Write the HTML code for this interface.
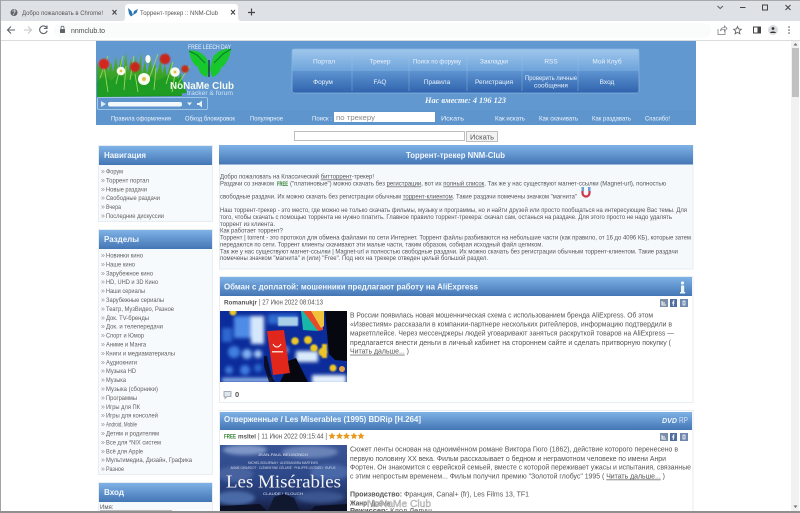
<!DOCTYPE html>
<html lang="ru"><head><meta charset="utf-8"><title>Торрент-трекер :: NNM-Club</title>
<style>
html,body{margin:0;padding:0;background:#fff;width:800px;height:513px;overflow:hidden}
svg{position:absolute;left:0;top:0;display:block;filter:blur(.3px)}
text{font-family:"Liberation Sans","DejaVu Sans",sans-serif;white-space:pre}
.b{font-size:6.3px;fill:#555}
.s{font-size:6.9px;fill:#555}
.n{font-size:6.5px;fill:#5f5f5f}
.r{font-size:7px;fill:#8a8a8a}
.w{font-size:6.5px;fill:#edf4fb}
.m{font-size:6.5px;fill:#eaf2fb;text-anchor:middle}
.h{font-size:8.6px;font-weight:bold;fill:#f2f7fc}
.u{text-decoration:underline}
.ch{font-size:6.5px;fill:#555}
.ic{fill:none;stroke:#5f6368;stroke-width:1.1}
</style></head><body>
<svg width="800" height="513" viewBox="0 0 800 513" xmlns="http://www.w3.org/2000/svg">
<defs>
<linearGradient id="head" x1="0" y1="0" x2="0" y2="1"><stop offset="0" stop-color="#7fb2e6"/><stop offset="1" stop-color="#4376b4"/></linearGradient>
<linearGradient id="m1" x1="0" y1="0" x2="0" y2="1"><stop offset="0" stop-color="#a0c7ec"/><stop offset="1" stop-color="#6da3da"/></linearGradient>
<linearGradient id="m2" x1="0" y1="0" x2="0" y2="1"><stop offset="0" stop-color="#5d94d0"/><stop offset="1" stop-color="#2f63ad"/></linearGradient>
<linearGradient id="grass" x1="0" y1="0" x2="0" y2="1"><stop offset="0" stop-color="#58b030"/><stop offset="1" stop-color="#1c9620"/></linearGradient>
<linearGradient id="lm" x1="0" y1="0" x2="0" y2="1"><stop offset="0" stop-color="#3a5596"/><stop offset=".5" stop-color="#2c4788"/><stop offset=".8" stop-color="#22356c"/><stop offset="1" stop-color="#141c3c"/></linearGradient>
<filter id="bl"><feGaussianBlur stdDeviation="1.8"/></filter>
<filter id="bl1"><feGaussianBlur stdDeviation=".7"/></filter>
<clipPath id="c1"><rect x="220" y="311" width="127" height="71"/></clipPath>
<clipPath id="c2"><rect x="220" y="445" width="127" height="66"/></clipPath>
</defs>

<!-- Browser chrome -->
<rect width="800" height="21" fill="#dee1e6"/>
<rect width="800" height="1" fill="#a8a9ab"/>
<rect y="21" width="800" height="19" fill="#fff"/>
<rect y="40" width="800" height="1" fill="#dadce0"/>
<rect x="54" y="23" width="657" height="15" rx="7.500" fill="#fafbfb"/>
<path d="M122 21 a3 3 0 0 0 3-3 V7 a3 3 0 0 1 3-3 H235 a3 3 0 0 1 3 3 V18 a3 3 0 0 0 3 3z" fill="#fff"/>
<circle cx="14" cy="12.500" r="3.500" fill="#5f6368"/><path d="M12 11h4M14 9l1 3-2 3" stroke="#dee1e6" stroke-width=".7" fill="none"/>
<text x="22" y="15" class="ch" textLength="81" lengthAdjust="spacingAndGlyphs">Добро пожаловать в Chrome!</text>
<path d="M112.500 10l4 4.500M116.500 10l-4 4.500" stroke="#444" stroke-width="1.100"/>
<path d="M128 8l3.500 3 1.500 4-2 1.500-2-2.500zM133 15l1-4 4-2-1.500 4z" fill="#2d76b4"/>
<text x="140" y="15" class="ch" textLength="78" lengthAdjust="spacingAndGlyphs">Торрент-трекер :: NNM-Club</text>
<path d="M231 10l4 4.500M235 10l-4 4.500" stroke="#444" stroke-width="1.100"/>
<path d="M251.500 8.500v7M248 12.500h7" stroke="#444" stroke-width="1.200"/>
<path d="M15 30h-7M11 26.500L7.500 30l3.500 3.500" class="ic"/>
<path d="M24 30h7M28 26.500l3.500 3.500-3.500 3.500" fill="none" stroke="#c4c7cb" stroke-width="1.100"/>
<path d="M46.500 27.500a3.800 3.800 0 1 0 .6 3.200M47 25.500v3h-3" class="ic"/>
<rect x="60" y="29" width="5" height="4" rx=".6" fill="#5f6368"/><path d="M61 29v-1.300a1.500 1.500 0 0 1 3 0V29" fill="none" stroke="#5f6368" stroke-width=".8"/>
<text x="71" y="33" font-size="7" fill="#4a4a4a" textLength="34" lengthAdjust="spacingAndGlyphs">nnmclub.to</text>
<path d="M718 29v5.500h7V31M720.500 30.500c.3-2 1.700-3 4-3V26l2.500 2.500-2.500 2.500v-1.500c-1.800 0-3 .2-4 1z" fill="none" stroke="#7a7d81" stroke-width=".8"/>
<path d="M737.500 26.500l1.100 2.500 2.700.3-2 1.800.6 2.700-2.400-1.400-2.400 1.400.6-2.700-2-1.800 2.700-.3z" fill="none" stroke="#5f6368" stroke-width=".9"/>
<rect x="753.500" y="27" width="7" height="6" fill="none" stroke="#444" stroke-width="1"/><rect x="757.500" y="27" width="3" height="6" fill="#444"/>
<circle cx="773" cy="30" r="5" fill="#dadce0"/><circle cx="773" cy="28.500" r="1.400" fill="#333"/><path d="M770 33c.3-2 5.700-2 6 0z" fill="#333"/>
<g fill="#555"><circle cx="789" cy="27" r=".8"/><circle cx="789" cy="30" r=".8"/><circle cx="789" cy="33" r=".8"/></g>
<path d="M717.500 6l2.700 2.500L723 6" class="ic"/>
<path d="M740 7.500h5.500" stroke="#444" stroke-width="1"/>
<rect x="762.500" y="5" width="5" height="5" fill="none" stroke="#444" stroke-width="1"/>
<path d="M785.500 5l5 5M790.500 5l-5 5" stroke="#444" stroke-width="1"/>

<!-- window border -->
<rect x="0" y="0" width="1" height="513" fill="#a2a3a5"/>

<!-- Scrollbar -->
<rect x="791" y="41" width="8" height="470" fill="#f1f1f1"/>
<rect x="792" y="48" width="7" height="49" fill="#c1c1c1"/>
<path d="M795.500 43l-2 2.500h4zM795.500 508l-2-2.500h4z" fill="#707070"/>

<!-- Site header -->
<rect x="96" y="41" width="600" height="84" fill="#6198d0"/>
<rect x="96" y="110" width="600" height="15" fill="#5f95cd"/>

<!-- logo -->
<g>
<path d="M97 97 V62 l2 6 2-4 2 8 3-14 2 14 3-10 2 10 3-16 2 14 3-12 2 14 3-20 2 20 3-14 2 14 3-16 2 16 3-20 1 22 3-14 2 14 4-18 1 18 3-12 2 12 4-16 1 16 3-10 2 12 4-14 2 16 4-12 1 14 3-8 1 24z" fill="url(#grass)"/>
<path d="M97 97 V82 l8-6 6 5 8-7 7 7 8-6 7 6 9-6 7 6 9-5 7 5 8-4 6 16z" fill="#1f9c24"/>
<path d="M100 78l8-22M108 92l-4-26M116 84l7-28M124 90l2-24M130 80l4-24M138 92l-3-18M148 82l10-28M154 90l2-22M166 84l7-22M172 92l3-18M178 84l12-18" stroke="#98d85a" stroke-width=".9" fill="none"/>
<g filter="url(#bl1)">
<circle cx="104" cy="64" r="5.300" fill="#d4281c"/><circle cx="135" cy="67" r="5" fill="#c8281c"/><circle cx="165" cy="59" r="5.300" fill="#c9261c"/><circle cx="185" cy="69" r="3.800" fill="#c03018"/>
</g>
<g fill="#fbfbf2"><circle cx="121" cy="71" r="4.300"/><circle cx="144" cy="79" r="6"/><ellipse cx="148" cy="59" rx="2.600" ry="4"/><circle cx="175" cy="72" r="4.800"/></g>
<g fill="#e0c24a"><circle cx="121" cy="71" r="1.400"/><circle cx="144" cy="79" r="2"/><circle cx="175" cy="72" r="1.500"/></g>
<path d="M189 51 c6-2 14 2 18 8 l2 10 -2 8 c-5-1-8-5-9-10 c-5-2-8-9-9-16z" fill="#17c72c"/>
<path d="M231 49 c-6-1-14 2-18 8 l-3 12 2 8 c5-1 8-5 9-9 c6-4 9-12 10-19z" fill="#17c72c"/>
<path d="M189 51l8 4 8 8M231 49l-8 5-9 9" stroke="#0b7f2c" stroke-width="1.200" fill="none"/>
<path d="M209 60v17" stroke="#0d3a30" stroke-width="1.300"/>
<text x="188" y="49" font-size="6" fill="#eef5fc" textLength="43" lengthAdjust="spacingAndGlyphs">FREE LEECH DAY</text>
<text x="170" y="89" font-size="10.500" font-weight="bold" fill="#f4f9f0" textLength="64" lengthAdjust="spacingAndGlyphs">NoNaMe Club</text>
<text x="187" y="95" font-size="6.500" fill="#cfe2f4" textLength="46" lengthAdjust="spacingAndGlyphs">tracker &amp; forum</text>
<rect x="97.500" y="97.500" width="110" height="12" rx="1.500" fill="#5f95cd" stroke="#b5d2ee" stroke-width=".8"/>
<path d="M101 101v6l5-3z" fill="#dcebf8"/>
<rect x="108" y="102" width="74" height="4.500" rx="2" fill="#f3f8fd"/>
<path d="M187 102.500h5l-2.500 3z" fill="#e8f2fb"/>
<path d="M197 103h2l3-2.500v7l-3-2.500h-2z" fill="#e8f2fb"/>
</g>

<!-- menu -->
<rect x="292" y="49" width="347" height="22" fill="url(#m1)"/>
<rect x="292" y="71" width="347" height="22" fill="url(#m2)"/>
<rect x="292" y="49" width="347" height="44" rx="2.500" fill="none" stroke="#86b3e0" stroke-width=".8"/>
<path d="M352 51v40M409 51v40M467 51v40M522 51v40M578 51v40" stroke="#9ac2e8" stroke-width=".7" opacity=".55"/>
<text x="324" y="63.500" class="m">Портал</text><text x="380" y="63.500" class="m">Трекер</text><text x="437" y="63.500" class="m" textLength="48" lengthAdjust="spacingAndGlyphs">Поиск по форуму</text><text x="494" y="63.500" class="m">Закладки</text><text x="551" y="63.500" class="m">RSS</text><text x="607" y="63.500" class="m">Мой Клуб</text>
<text x="323" y="84" class="m">Форум</text><text x="380" y="84" class="m">FAQ</text><text x="437" y="84" class="m">Правила</text><text x="494" y="84" class="m">Регистрация</text><text x="551" y="80" class="m" textLength="52" lengthAdjust="spacingAndGlyphs">Проверить личные</text><text x="551" y="87.500" class="m">сообщения</text><text x="607" y="84" class="m">Вход</text>
<text x="425" y="103" font-size="8" font-weight="bold" font-style="italic" fill="#f2f7fc" style="font-family:'Liberation Serif',serif" textLength="81" lengthAdjust="spacingAndGlyphs">Нас вместе: 4 196 123</text>

<g>
<text x="111" y="120.500" class="w" textLength="60" lengthAdjust="spacingAndGlyphs">Правила оформления</text>
<text x="185" y="120.500" class="w" textLength="50" lengthAdjust="spacingAndGlyphs">Обход блокировок</text>
<text x="250" y="120.500" class="w" textLength="33" lengthAdjust="spacingAndGlyphs">Популярное</text>
<text x="312" y="120.500" class="w" textLength="20" lengthAdjust="spacingAndGlyphs">Поиск :</text>
<rect x="334" y="112" width="101" height="10" fill="#fff"/>
<text x="336" y="120" font-size="7.500" fill="#8a8a8a" textLength="39" lengthAdjust="spacingAndGlyphs">по трекеру</text>
<text x="441" y="120.500" class="w" textLength="23" lengthAdjust="spacingAndGlyphs">Искать</text>
<text x="495" y="120.500" class="w" textLength="30" lengthAdjust="spacingAndGlyphs">Как искать</text>
<text x="539" y="120.500" class="w" textLength="39" lengthAdjust="spacingAndGlyphs">Как скачивать</text>
<text x="592" y="120.500" class="w" textLength="39" lengthAdjust="spacingAndGlyphs">Как раздавать</text>
<text x="645" y="120.500" class="w" textLength="25" lengthAdjust="spacingAndGlyphs">Спасибо!</text>
</g>

<!-- second search -->
<rect x="294.500" y="131.500" width="170" height="9" fill="#fff" stroke="#bdbdbd"/>
<rect x="466.500" y="131.500" width="31" height="10" fill="#f3f3f3" stroke="#bdbdbd"/>
<text x="470" y="139.500" font-size="7.500" fill="#555" textLength="24" lengthAdjust="spacingAndGlyphs">Искать</text>

<!-- Sidebar boxes -->
<rect x="98.500" y="145.500" width="114" height="76" fill="#f7fafc" stroke="#e6edf3"/>
<rect x="99" y="146" width="113" height="19" fill="url(#head)"/>
<text x="104" y="158" class="h" textLength="42" lengthAdjust="spacingAndGlyphs">Навигация</text>
<g>
<text x="101" y="173.500" class="r">»</text><text x="106" y="173.500" class="n" textLength="17" lengthAdjust="spacingAndGlyphs">Форум</text>
<text x="101" y="182.500" class="r">»</text><text x="106" y="182.500" class="n" textLength="43" lengthAdjust="spacingAndGlyphs">Торрент портал</text>
<text x="101" y="191.300" class="r">»</text><text x="106" y="191.300" class="n" textLength="41" lengthAdjust="spacingAndGlyphs">Новые раздачи</text>
<text x="101" y="200.200" class="r">»</text><text x="106" y="200.200" class="n" textLength="54" lengthAdjust="spacingAndGlyphs">Свободные раздачи</text>
<text x="101" y="209" class="r">»</text><text x="106" y="209" class="n" textLength="15" lengthAdjust="spacingAndGlyphs">Вчера</text>
<text x="101" y="218" class="r">»</text><text x="106" y="218" class="n" textLength="58" lengthAdjust="spacingAndGlyphs">Последние дискуссии</text>
</g>

<rect x="98.500" y="229.500" width="114" height="245" fill="#f7fafc" stroke="#e6edf3"/>
<rect x="99" y="230" width="113" height="19" fill="url(#head)"/>
<text x="104" y="242" class="h" textLength="35" lengthAdjust="spacingAndGlyphs">Разделы</text>
<g>
<text x="101" y="257.500" class="r">»</text><text x="106" y="257.500" class="n" textLength="37" lengthAdjust="spacingAndGlyphs">Новинки кино</text>
<text x="101" y="266.400" class="r">»</text><text x="106" y="266.400" class="n" textLength="29" lengthAdjust="spacingAndGlyphs">Наше кино</text>
<text x="101" y="275.300" class="r">»</text><text x="106" y="275.300" class="n" textLength="47" lengthAdjust="spacingAndGlyphs">Зарубежное кино</text>
<text x="101" y="284.200" class="r">»</text><text x="106" y="284.200" class="n" textLength="52" lengthAdjust="spacingAndGlyphs">HD, UHD и 3D Кино</text>
<text x="101" y="293.100" class="r">»</text><text x="106" y="293.100" class="n" textLength="39" lengthAdjust="spacingAndGlyphs">Наши сериалы</text>
<text x="101" y="302" class="r">»</text><text x="106" y="302" class="n" textLength="58" lengthAdjust="spacingAndGlyphs">Зарубежные сериалы</text>
<text x="101" y="310.900" class="r">»</text><text x="106" y="310.900" class="n" textLength="68" lengthAdjust="spacingAndGlyphs">Театр, МузВидео, Разное</text>
<text x="101" y="319.800" class="r">»</text><text x="106" y="319.800" class="n" textLength="43" lengthAdjust="spacingAndGlyphs">Док. TV-бренды</text>
<text x="101" y="328.700" class="r">»</text><text x="106" y="328.700" class="n" textLength="57" lengthAdjust="spacingAndGlyphs">Док. и телепередачи</text>
<text x="101" y="337.600" class="r">»</text><text x="106" y="337.600" class="n" textLength="38" lengthAdjust="spacingAndGlyphs">Спорт и Юмор</text>
<text x="101" y="346.500" class="r">»</text><text x="106" y="346.500" class="n" textLength="40" lengthAdjust="spacingAndGlyphs">Аниме и Манга</text>
<text x="101" y="355.400" class="r">»</text><text x="106" y="355.400" class="n" textLength="69" lengthAdjust="spacingAndGlyphs">Книги и медиаматериалы</text>
<text x="101" y="364.300" class="r">»</text><text x="106" y="364.300" class="n" textLength="31" lengthAdjust="spacingAndGlyphs">Аудиокниги</text>
<text x="101" y="373.200" class="r">»</text><text x="106" y="373.200" class="n" textLength="30" lengthAdjust="spacingAndGlyphs">Музыка HD</text>
<text x="101" y="382.100" class="r">»</text><text x="106" y="382.100" class="n" textLength="20" lengthAdjust="spacingAndGlyphs">Музыка</text>
<text x="101" y="391" class="r">»</text><text x="106" y="391" class="n" textLength="52" lengthAdjust="spacingAndGlyphs">Музыка (сборники)</text>
<text x="101" y="399.900" class="r">»</text><text x="106" y="399.900" class="n" textLength="31" lengthAdjust="spacingAndGlyphs">Программы</text>
<text x="101" y="408.800" class="r">»</text><text x="106" y="408.800" class="n" textLength="34" lengthAdjust="spacingAndGlyphs">Игры для ПК</text>
<text x="101" y="417.700" class="r">»</text><text x="106" y="417.700" class="n" textLength="52" lengthAdjust="spacingAndGlyphs">Игры для консолей</text>
<text x="101" y="426.600" class="r">»</text><text x="106" y="426.600" class="n" textLength="31" lengthAdjust="spacingAndGlyphs">Android, Mobile</text>
<text x="101" y="435.500" class="r">»</text><text x="106" y="435.500" class="n" textLength="53" lengthAdjust="spacingAndGlyphs">Детям и родителям</text>
<text x="101" y="444.400" class="r">»</text><text x="106" y="444.400" class="n" textLength="55" lengthAdjust="spacingAndGlyphs">Все для *NIX систем</text>
<text x="101" y="453.300" class="r">»</text><text x="106" y="453.300" class="n" textLength="37" lengthAdjust="spacingAndGlyphs">Всё для Apple</text>
<text x="101" y="462.200" class="r">»</text><text x="106" y="462.200" class="n" textLength="86" lengthAdjust="spacingAndGlyphs">Мультимедиа, Дизайн, Графика</text>
<text x="101" y="471.100" class="r">»</text><text x="106" y="471.100" class="n" textLength="18" lengthAdjust="spacingAndGlyphs">Разное</text>
</g>

<rect x="98.500" y="482.500" width="114" height="30" fill="#f7fafc" stroke="#e6edf3"/>
<rect x="99" y="483" width="113" height="19" fill="url(#head)"/>
<text x="104" y="495" class="h" textLength="20" lengthAdjust="spacingAndGlyphs">Вход</text>
<text x="100" y="509" font-size="6" fill="#555">Имя:</text>
<rect x="100.500" y="510.500" width="71" height="4" fill="#fff" stroke="#bbb"/>

<!-- Main box 1 -->
<rect x="219.500" y="145.500" width="473.500" height="123.500" fill="#f5f9fc" stroke="#e6edf3"/>
<rect x="219" y="145" width="474" height="19.500" fill="url(#head)"/>
<text x="406" y="158" class="h" textLength="99" lengthAdjust="spacingAndGlyphs">Торрент-трекер NNM-Club</text>
<g>
<text x="220" y="178.500" class="b" textLength="154" lengthAdjust="spacingAndGlyphs">Добро пожаловать на Классический <tspan class="u">битторрент</tspan>-трекер!</text>
<text x="220" y="185.500" class="b" textLength="54" lengthAdjust="spacingAndGlyphs">Раздачи со значком</text>
<text x="277" y="186" font-size="6.500" font-weight="bold" fill="#2e7d2e" textLength="11" lengthAdjust="spacingAndGlyphs">FREE</text>
<text x="290" y="185.500" class="b" textLength="376" lengthAdjust="spacingAndGlyphs">("платиновые") можно скачать без <tspan class="u">регистрации</tspan>, вот их <tspan class="u">полный список</tspan>. Так же у нас существуют магнет-ссылки (Magnet-url), полностью</text>
<text x="220" y="198.500" class="b" textLength="357" lengthAdjust="spacingAndGlyphs">свободные раздачи. Их можно скачать без регистрации обычным <tspan class="u">торрент-клиентом</tspan>. Такие раздачи помечены значком "магнита"</text>
<path d="M582.500 191v2a3.500 3.500 0 0 0 7 0v-2" fill="none" stroke="#c93a4a" stroke-width="2.200"/>
<path d="M581.500 187h2.500v4h-2.500zM588 187h2.500v4H588z" fill="#6f9ed6"/>
<text x="220" y="212" class="b" textLength="467" lengthAdjust="spacingAndGlyphs">Наш торрент-трекер - это место, где можно не только скачать фильмы, музыку и программы, но и найти друзей или просто пообщаться на интересующие Вас темы. Для</text>
<text x="220" y="219" class="b" textLength="452" lengthAdjust="spacingAndGlyphs">того, чтобы скачать с помощью торрента не нужно платить. Главное правило торрент-трекера: скачал сам, останься на раздаче. Для этого просто не надо удалять</text>
<text x="220" y="225.800" class="b" textLength="55" lengthAdjust="spacingAndGlyphs">торрент из клиента.</text>
<text x="220" y="232.700" class="b" textLength="63" lengthAdjust="spacingAndGlyphs">Как работает торрент?</text>
<text x="220" y="239.500" class="b" textLength="471" lengthAdjust="spacingAndGlyphs">Торрент | torrent - это протокол для обмена файлами по сети Интернет. Торрент файлы разбиваются на небольшие части (как правило, от 16 до 4096 КБ), которые затем</text>
<text x="220" y="246.500" class="b" textLength="323" lengthAdjust="spacingAndGlyphs">передаются по сети. Торрент клиенты скачивают эти малые части, таким образом, собирая исходный файл целиком.</text>
<text x="220" y="253.300" class="b" textLength="458" lengthAdjust="spacingAndGlyphs">Так же у нас существуют магнет-ссылки | Magnet-url и полностью свободные раздачи. Их можно скачать без регистрации обычным торрент-клиентом. Такие раздачи</text>
<text x="220" y="260" class="b" textLength="268" lengthAdjust="spacingAndGlyphs">помечены значком "магнита" и (или) "Free". Под них на трекере отведен целый большой раздел.</text>
</g>

<!-- News 1 -->
<rect x="219.500" y="276.500" width="473.500" height="126" fill="#fff" stroke="#e6edf3"/>
<rect x="220" y="277" width="472" height="19" fill="url(#head)"/>
<text x="224" y="289.500" font-size="8" font-weight="bold" fill="#f2f7fc" textLength="254" lengthAdjust="spacingAndGlyphs">Обман с доплатой: мошенники предлагают работу на AliExpress</text>
<circle cx="682.500" cy="283" r="1.600" fill="#eef5fc"/><rect x="681" y="285.500" width="3.200" height="7" fill="#eef5fc"/><rect x="680" y="292" width="5.200" height="1.500" fill="#eef5fc"/>
<text x="224" y="304.500" font-size="6.800" font-weight="bold" fill="#555" textLength="33" lengthAdjust="spacingAndGlyphs">Romanukjr</text>
<text x="259" y="304.500" class="s" textLength="64" lengthAdjust="spacingAndGlyphs">| 27 Июн 2022 08:04:13</text>
<g><rect x="660" y="299" width="8" height="8" fill="#7b8fa8"/><rect x="670" y="299" width="7" height="8" fill="#4f6ea0"/><rect x="680" y="299" width="8" height="8" fill="#6f88b0"/>
<path d="M662 301v4h4M662 303h3" stroke="#fff" stroke-width=".9" fill="none"/><path d="M674.500 301h-1.200v5M672 303h2.500" stroke="#fff" stroke-width=".9" fill="none"/><path d="M683 301h2v4h-2z" stroke="#fff" stroke-width=".8" fill="none"/></g>

<g clip-path="url(#c1)">
<rect x="220" y="311" width="127" height="71" fill="#0b2c9a"/>
<g filter="url(#bl)">
<rect x="234" y="316" width="20" height="22" fill="#4f8ce8"/>
<rect x="251" y="316" width="13" height="28" fill="#d5e8fb"/>
<rect x="222" y="328" width="10" height="14" fill="#2f66d0"/>
<circle cx="234" cy="352" r="6" fill="#3f7fe0"/><circle cx="247" cy="354" r="5" fill="#7fb0f0"/><circle cx="258" cy="354" r="4" fill="#a8cdf6"/><circle cx="229" cy="370" r="4" fill="#3d78d8"/><circle cx="245" cy="370" r="5" fill="#3f7ce0"/><circle cx="258" cy="368" r="4" fill="#2c66cc"/><circle cx="285" cy="350" r="4" fill="#5a90e8"/>
<rect x="296" y="351" width="22" height="11" fill="#dbecfc"/><rect x="312" y="375" width="34" height="9" fill="#e4f1fd"/>
<rect x="222" y="378" width="50" height="4" fill="#9cc0f0"/>
<rect x="268" y="314" width="30" height="10" fill="#2f6ad0"/>
</g>
<rect x="278" y="317" width="20" height="9" fill="#a9cfe8" filter="url(#bl1)"/>
<path d="M301 311h8l9 20-15-1z" fill="#18b8a8"/><path d="M303 311h20v19l-5 1z" fill="#e84b2a"/><path d="M311 311h13v15l-3 2z" fill="#f0c23c"/>
<path d="M325 311h22v50l-12-1-6-6z" fill="#070710"/>
<path d="M267 331l17-1 6 43-17 2z" fill="#e1261c"/>
<path d="M273 344c2 4 6 4 8 0" stroke="#fff" stroke-width="1" fill="none"/><rect x="272" y="351" width="11" height="1.500" fill="#f8d0c8"/>
<path d="M280 382l4-8 6-1-2-12 8-3 4 8 8 16z" fill="#070710"/>
<path d="M264 356l3 0 4 18 4 8h-6l-5-16z" fill="#070710" opacity=".8"/>
<g fill="#ecc628" filter="url(#bl1)"><circle cx="233" cy="312" r="3.500"/><circle cx="295" cy="341" r="3.800"/><circle cx="308" cy="340" r="4"/><circle cx="314" cy="348" r="3.800"/><circle cx="323" cy="352" r="4.500"/><circle cx="333" cy="368" r="3.500"/><rect x="322" y="344" width="5" height="14"/></g>
<circle cx="342" cy="369" r="3" fill="#e0a040"/>
</g>

<g>
<text x="350" y="317.500" class="s" textLength="303" lengthAdjust="spacingAndGlyphs">В России появилась новая мошенническая схема с использованием бренда AliExpress. Об этом</text>
<text x="350" y="326.700" class="s" textLength="322" lengthAdjust="spacingAndGlyphs">«Известиям» рассказали в компании-партнере нескольких ритейлеров, информацию подтвердили в</text>
<text x="350" y="335.500" class="s" textLength="324" lengthAdjust="spacingAndGlyphs">маркетплейсе. Через мессенджеры людей уговаривают заняться раскруткой товаров на AliExpress —</text>
<text x="350" y="345" class="s" textLength="321" lengthAdjust="spacingAndGlyphs">предлагается внести деньги в личный кабинет на стороннем сайте и сделать притворную покупку (</text>
<text x="350" y="353.700" class="s" textLength="59" lengthAdjust="spacingAndGlyphs"><tspan class="u">Читать дальше...</tspan> )</text>
</g>
<path d="M224 391.500h7v5h-4l-2 2v-2h-1z" fill="#dfe6ec" stroke="#8d9aa6" stroke-width=".8"/>
<text x="235" y="397" font-size="7.500" font-weight="bold" fill="#555">0</text>

<!-- News 2 -->
<rect x="219.500" y="410.500" width="473.500" height="105" fill="#fff" stroke="#e6edf3"/>
<rect x="220" y="412" width="472" height="18" fill="url(#head)"/>
<text x="224" y="422" font-size="8" font-weight="bold" fill="#f2f7fc" textLength="197" lengthAdjust="spacingAndGlyphs">Отверженные / Les Miserables (1995) BDRip [H.264]</text>
<text x="662" y="423" font-size="7" font-weight="bold" font-style="italic" fill="#e9f2fb" textLength="15" lengthAdjust="spacingAndGlyphs">DVD</text>
<text x="679" y="423" font-size="8" fill="#cfe2f4" textLength="9" lengthAdjust="spacingAndGlyphs">RP</text>
<text x="224" y="438.500" font-size="6.500" font-weight="bold" fill="#2e7d2e" textLength="12" lengthAdjust="spacingAndGlyphs">FREE</text>
<text x="238" y="438.500" font-size="6.800" font-weight="bold" fill="#555" textLength="18" lengthAdjust="spacingAndGlyphs">msltel</text>
<text x="258" y="438.500" class="s" textLength="69" lengthAdjust="spacingAndGlyphs">| 11 Июн 2022 09:15:44 |</text>
<g fill="#e89a1e"><path d="M332 432.500l1.100 2.200 2.400.3-1.800 1.700.5 2.400-2.200-1.200-2.200 1.200.5-2.400-1.800-1.700 2.400-.3z"/><path d="M339.500 432.500l1.100 2.200 2.400.3-1.800 1.700.5 2.400-2.200-1.200-2.200 1.200.5-2.400-1.800-1.700 2.400-.3z"/><path d="M346.500 432.500l1.100 2.200 2.400.3-1.800 1.700.5 2.400-2.200-1.200-2.200 1.200.5-2.400-1.800-1.700 2.400-.3z"/><path d="M354 432.500l1.100 2.200 2.400.3-1.800 1.700.5 2.400-2.200-1.200-2.200 1.200.5-2.400-1.800-1.700 2.400-.3z"/><path d="M361 432.500l1.100 2.200 2.400.3-1.800 1.700.5 2.400-2.200-1.200-2.200 1.200.5-2.400-1.800-1.700 2.400-.3z"/></g>
<g><rect x="660" y="433" width="8" height="8" fill="#7b8fa8"/><rect x="670" y="433" width="7" height="8" fill="#4f6ea0"/><rect x="680" y="433" width="8" height="8" fill="#6f88b0"/>
<path d="M662 435v4h4M662 437h3" stroke="#fff" stroke-width=".9" fill="none"/><path d="M674.500 435h-1.200v5M672 437h2.500" stroke="#fff" stroke-width=".9" fill="none"/><path d="M683 435h2v4h-2z" stroke="#fff" stroke-width=".8" fill="none"/></g>

<g clip-path="url(#c2)">
<rect x="220" y="445" width="127" height="66" fill="url(#lm)"/>
<g filter="url(#bl)"><ellipse cx="245" cy="450" rx="22" ry="5" fill="#7f97c8"/><ellipse cx="310" cy="452" rx="28" ry="6" fill="#6a83b8"/><ellipse cx="330" cy="472" rx="20" ry="8" fill="#4a67a8"/><ellipse cx="235" cy="474" rx="18" ry="8" fill="#46629f"/><ellipse cx="235" cy="498" rx="20" ry="7" fill="#4a6ba6"/><ellipse cx="320" cy="497" rx="24" ry="6" fill="#3a5590"/></g>
<text x="283" y="456" font-size="3.500" fill="#e0e6f0" text-anchor="middle" textLength="50" lengthAdjust="spacingAndGlyphs">JEAN-PAUL BELMONDO</text>
<text x="283" y="464" font-size="3.200" fill="#d0d8e8" text-anchor="middle" textLength="70" lengthAdjust="spacingAndGlyphs">MICHEL BOUJENAH · ALESSANDRA MARTINES</text>
<text x="283" y="469" font-size="3.200" fill="#d0d8e8" text-anchor="middle" textLength="105" lengthAdjust="spacingAndGlyphs">ANNIE GIRARDOT · CLÉMENTINE CÉLARIÉ · PHILIPPE LEOTARD · RUFUS</text>
<text x="226" y="487.500" font-size="17.500" fill="#f4f4f2" style="font-family:'Liberation Serif',serif" textLength="115" lengthAdjust="spacingAndGlyphs">Les Misérables</text>
<text x="283" y="495" font-size="3.500" fill="#e0e6f0" text-anchor="middle" textLength="40" lengthAdjust="spacingAndGlyphs">CLAUDE LELOUCH</text>
<path d="M268 511l6-14 10-3 10 4 6 13z" fill="#10182f"/>
<path d="M220 511v-5l40-2 7 7zM310 511l5-5 32-2v7z" fill="#0b1024"/>
</g>

<g>
<text x="350" y="451.500" class="s" textLength="328" lengthAdjust="spacingAndGlyphs">Сюжет ленты основан на одноимённом романе Виктора Гюго (1862), действие которого перенесено в</text>
<text x="350" y="460.800" class="s" textLength="316" lengthAdjust="spacingAndGlyphs">первую половину XX века. Фильм рассказывает о бедном и неграмотном человеке по имени Анри</text>
<text x="350" y="469.500" class="s" textLength="341" lengthAdjust="spacingAndGlyphs">Фортен. Он знакомится с еврейской семьей, вместе с которой переживает ужасы и испытания, связанные</text>
<text x="350" y="478.500" class="s" textLength="315" lengthAdjust="spacingAndGlyphs">с этим непростым временем... Фильм получил премию "Золотой глобус" 1995 ( <tspan class="u">Читать дальше...</tspan> )</text>
<text x="350" y="496.500" class="s" textLength="179" lengthAdjust="spacingAndGlyphs"><tspan font-weight="bold">Производство:</tspan> Франция, Canal+ (fr), Les Films 13, TF1</text>
<text x="350" y="505.500" class="s" textLength="40" lengthAdjust="spacingAndGlyphs"><tspan font-weight="bold">Жанр:</tspan> Драма</text>
<text x="350" y="513" class="s" textLength="82" lengthAdjust="spacingAndGlyphs"><tspan font-weight="bold">Режиссер:</tspan> Клод Лелуш</text>
</g>
<text x="367" y="507" font-size="10" fill="#d4d4d4" fill-opacity=".85" stroke="#8a8a8a" stroke-width=".3" textLength="64" lengthAdjust="spacingAndGlyphs">NoNaMe Club</text>

<rect x="0" y="511" width="800" height="2" fill="#8f9092"/>
</svg>
</body></html>
